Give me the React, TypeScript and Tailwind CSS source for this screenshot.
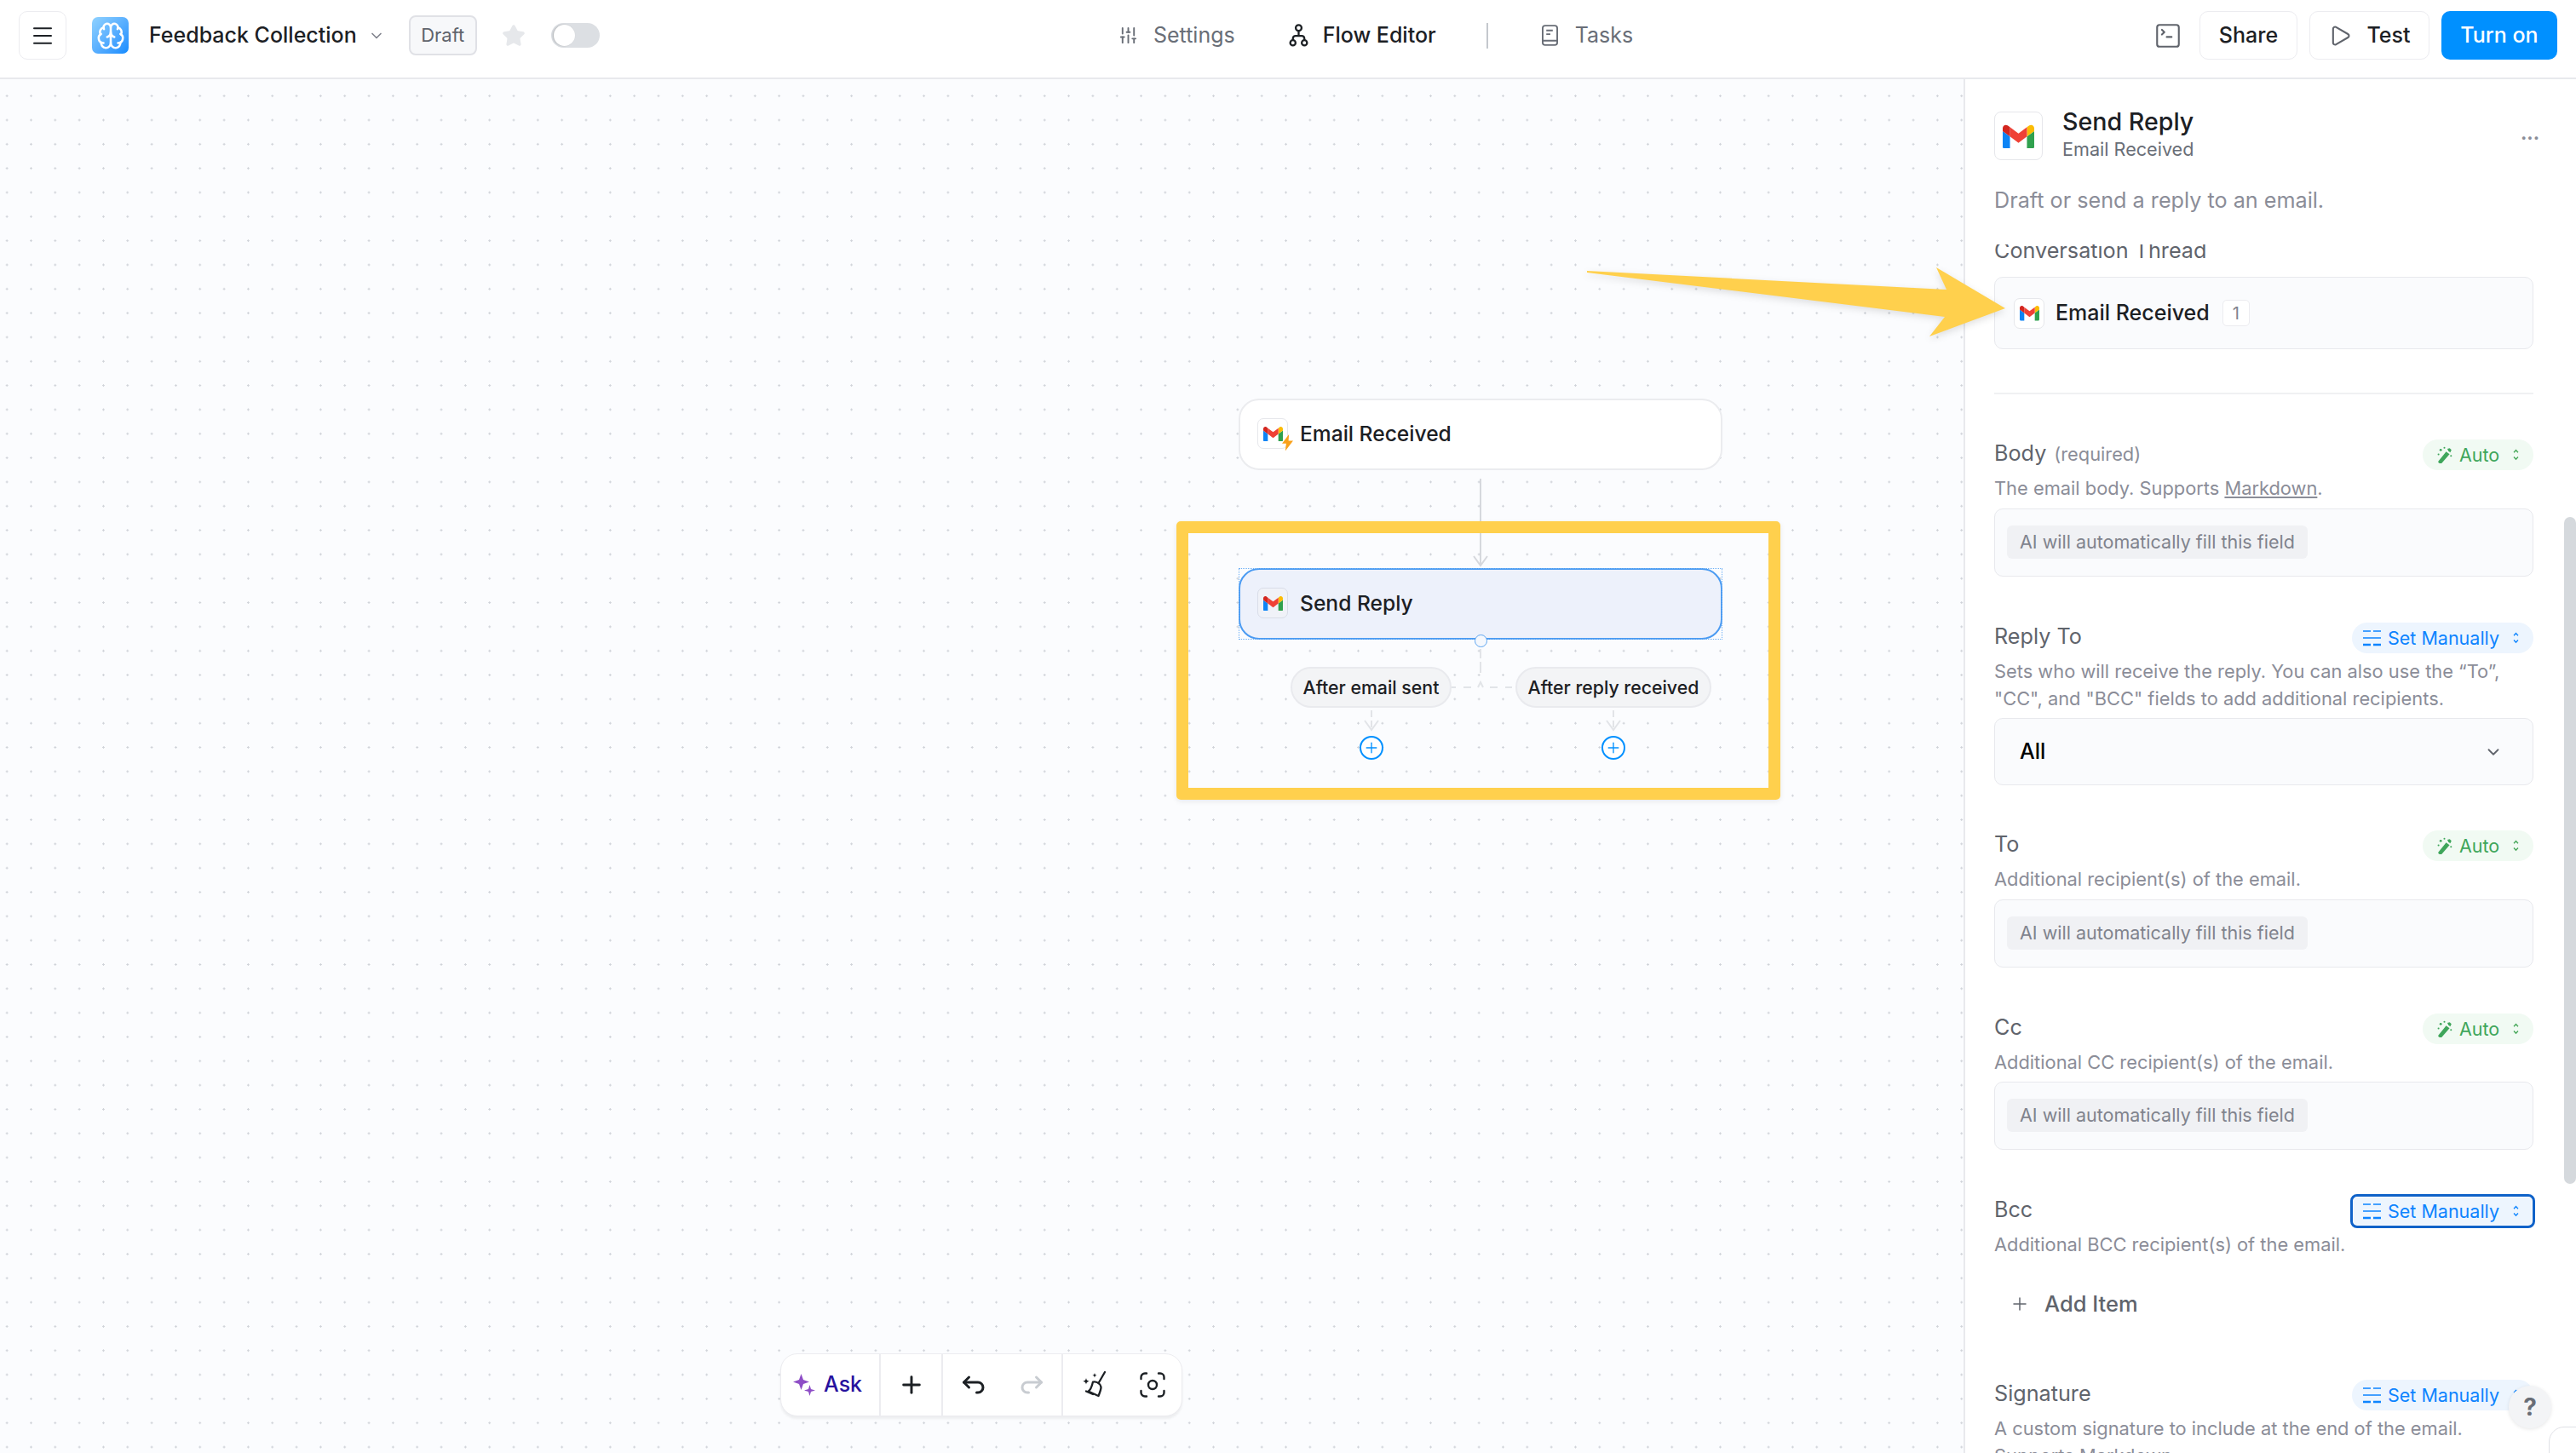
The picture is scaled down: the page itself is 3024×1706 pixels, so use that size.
import { Brain, ChevronDown, Menu, Play, Plus, SlidersVertical, SquareTerminal, Star } from "lucide-react";
import { TbArrowBackUp, TbArrowForwardUp } from "react-icons/tb";

const GmailIcon = ({ className }: { className?: string }) => (
  <svg viewBox="0 0 52 42" className={className}>
    <path fill="#0d84f5" d="M3.6 42h8.4V21.6L0 12.6v25.8C0 40.4 1.6 42 3.6 42z" />
    <path fill="#30a14e" d="M40 42h8.4c2 0 3.6-1.6 3.6-3.6V12.6l-12 9z" />
    <path fill="#fbbc04" d="M40 6v15.6l12-9V7.8c0-4.4-5-7-8.6-4.2z" />
    <path fill="#ef4136" d="M12 21.6V6l14 10.5L40 6v15.6L26 32.1z" />
    <path fill="#d3261f" d="M0 7.8v4.8l12 9V6L8.6 3.6C5 .8 0 3.4 0 7.8z" />
  </svg>
);

const GmailBox = ({ tinted, size = "small" }: { tinted?: boolean; size?: "small" | "large" }) => (
  <div
    className={
      size === "large"
        ? "flex h-[57px] w-[57px] shrink-0 items-center justify-center rounded-[8px] border border-[#e6e7eb] bg-white"
        : `flex h-[36px] w-[36px] shrink-0 items-center justify-center rounded-[7px] border ${tinted ? "border-[#d9dde8] bg-[#f0f2f8]" : "border-[#e6e7eb] bg-white"}`
    }
  >
    <GmailIcon className={size === "large" ? "w-[37px]" : "w-[23px]"} />
  </div>
);

const ChevronsSmall = ({ className }: { className?: string }) => (
  <svg viewBox="0 0 8 18" fill="none" stroke="currentColor" strokeWidth="1.6" className={className}>
    <path d="M1.2 6 4 3l2.8 3M1.2 12 4 15l2.8-3" />
  </svg>
);

const WandIcon = ({ className }: { className?: string }) => (
  <svg viewBox="0 0 22 24" fill="currentColor" className={className}>
    <path d="M13.4 7.2l4.6 3.6L7 23.4c-.6.6-1.4.7-2.1.2l-1.7-1.3c-.7-.6-.8-1.4-.3-2.1z" />
    <path d="M15 3.4l3.2-.8 2.4 2.4-1.6 3.4-2.6-2z" />
    <circle cx="6" cy="5" r="1.6" />
    <circle cx="11" cy="2" r="1.2" />
    <circle cx="3" cy="11" r="1.2" />
    <circle cx="20" cy="13" r="1.2" />
  </svg>
);

const ManualIcon = ({ className }: { className?: string }) => (
  <svg viewBox="0 0 21 20" fill="none" stroke="currentColor" className={className}>
    <path strokeWidth="1.6" d="M0 2h9M12 2h9M0 10h21" />
    <path strokeWidth="2.6" d="M0 18h9M12 18h9" />
  </svg>
);

const BookIcon = ({ className }: { className?: string }) => (
  <svg viewBox="0 0 20 26" fill="none" stroke="currentColor" strokeWidth="2" className={className}>
    <rect x="1" y="1" width="18" height="24" rx="3" />
    <path d="M1 19.5h18M5.5 7h8M5.5 11.5h5" />
  </svg>
);

const FlowIcon = ({ className }: { className?: string }) => (
  <svg viewBox="0 0 22 26" fill="none" stroke="currentColor" strokeWidth="2.2" className={className}>
    <circle cx="11" cy="4.6" r="3.3" />
    <path d="M11 8v5.500M4.500 18.500v-2a3 3 0 0 1 3-3h7a3 3 0 0 1 3 3v2" />
    <circle cx="4.500" cy="21.500" r="3" />
    <circle cx="17.500" cy="21.500" r="3" />
  </svg>
);

const SparklesIcon = ({ className }: { className?: string }) => (
  <svg viewBox="0 0 26 26" fill="currentColor" className={className}>
    <path d="M9.500 0 12 7l7 2.500L12 12l-2.500 7L7 12 0 9.500 7 7z" />
    <path d="M19.500 13 21 18l5 1.500L21 21l-1.500 5L18 21l-5-1.500L18 18z" />
  </svg>
);

const BroomIcon = ({ className }: { className?: string }) => (
  <svg viewBox="0 0 32 34" fill="none" stroke="currentColor" strokeWidth="2.3" strokeLinecap="round" strokeLinejoin="round" className={className}>
    <path d="M29 2 21.500 15" />
    <path d="M15 13.500c4-1 9 2 9.500 6 .2 2-.8 5-3 10.500l-12-5.500c2.500-1 4-4.500 5.500-11z" />
    <path d="M7 24.500 15 28" />
    <path fill="currentColor" stroke="none" d="M7 9c.4 2.400 1.300 3.300 3.800 3.800C8.300 13.300 7.400 14.200 7 16.600 6.600 14.200 5.700 13.300 3.200 12.800 5.700 12.300 6.600 11.400 7 9zM17 3c.3 1.700 1 2.400 2.800 2.800C18 6.100 17.300 6.800 17 8.600 16.700 6.800 16 6.100 14.200 5.800 16 5.400 16.700 4.700 17 3z" />
  </svg>
);

const ScanIcon = ({ className }: { className?: string }) => (
  <svg viewBox="0 0 30 30" fill="none" stroke="currentColor" strokeWidth="2.4" strokeLinecap="round" className={className}>
    <path d="M1.500 8V6a4.500 4.500 0 0 1 4.500-4.500h2M22 1.500h2A4.500 4.500 0 0 1 28.500 6v2M28.500 22v2a4.500 4.500 0 0 1-4.500 4.500h-2M8 28.500H6A4.500 4.500 0 0 1 1.500 24v-2" />
    <circle cx="15" cy="15" r="5" />
  </svg>
);

const Bolt = ({ className }: { className?: string }) => (
  <svg viewBox="0 0 12 18" fill="#f9a11b" className={className}>
    <path d="M7.500 0 0 10h4.500L3.500 18 12 7H7z" />
  </svg>
);

const ModePill = ({ mode, focused }: { mode: "auto" | "manual"; focused?: boolean }) =>
  mode === "auto" ? (
    <div className="flex h-[36px] w-[130px] items-center rounded-full bg-[#f1faf3] pl-[16px] text-[#3fa65b]">
      <WandIcon className="w-[19px]" />
      <span className="ml-[8px] text-[21.5px]">Auto</span>
      <ChevronsSmall className="ml-[16px] w-[7px] text-[#46a758]" />
    </div>
  ) : (
    <div
      className={`flex h-[36px] w-[213px] items-center bg-[#edf5fe] text-[#0d84ff] ${focused ? "rounded-[6px] border-2 border-white pl-[11px] outline-[3px] -outline-offset-1 outline-[#0f62c9]" : "rounded-full pl-[13px]"}`}
    >
      <ManualIcon className="w-[21px]" />
      <span className="ml-[8px] text-[21.5px]">Set Manually</span>
      <ChevronsSmall className="ml-[16px] w-[7px] text-[#0d84ff]" />
    </div>
  );

const Field = ({
  label,
  hint,
  mode,
  focused,
  children,
  desc,
  className = "mb-[54px]",
}: {
  label: string;
  hint?: string;
  mode: "auto" | "manual";
  focused?: boolean;
  desc: React.ReactNode;
  children?: React.ReactNode;
  className?: string;
}) => (
  <div className={className}>
    <div className="flex h-[36px] items-center justify-between">
      <div className="pb-[3px] text-[25.2px] text-[#60646c]">
        {label}
        {hint && <span className="ml-[9px] text-[21.8px] text-[#8b8d98]">{hint}</span>}
      </div>
      <ModePill mode={mode} focused={focused} />
    </div>
    <div className="mt-[5px] text-[21.85px] leading-[32px] text-[#8b8d98]">{desc}</div>
    {children}
  </div>
);

const AutoFill = ({ className = "mt-[8px]" }: { className?: string }) => (
  <div className={`${className} h-[80px] rounded-[10px] border border-[#e8e9ed] bg-[#fafbfd] px-[14px] pt-[19px]`}>
    <span className="inline-flex h-[39px] items-center rounded-[6px] bg-[#f0f1f4] px-[15px] text-[21.5px] text-[#80838d]">
      AI will automatically fill this field
    </span>
  </div>
);

const ToolbarButton = ({ children, className }: { children: React.ReactNode; className?: string }) => (
  <div className={`flex items-center ${className ?? ""}`}>{children}</div>
);

export default function App() {
  return (
    <div className="relative flex h-[1706px] w-[3024px] flex-col overflow-hidden bg-white [font-family:Inter,sans-serif] text-[#1c2024]">
      {/* top bar */}
      <header className="flex h-[93px] shrink-0 items-center border-b-2 border-[#e8e9ed] bg-white pb-[8px]">
        <div className="flex w-[1313px] shrink-0 items-center pl-[22px]">
          <button className="flex h-[57px] w-[56px] items-center justify-center rounded-[10px] border border-[#ececf0]">
            <Menu className="h-[30px] w-[30px]" strokeWidth={1.6} />
          </button>
          <div className="ml-[30px] flex h-[43px] w-[43px] items-center justify-center rounded-[7px] bg-gradient-to-br from-[#90d2ff] to-[#0c8bff]">
            <Brain className="h-[34px] w-[34px] text-white" strokeWidth={1.8} />
          </div>
          <span className="ml-[24px] text-[25px] font-medium">Feedback Collection</span>
          <ChevronDown className="ml-[13px] h-[20px] w-[20px] text-[#80838d]" strokeWidth={2} />
          <div className="ml-[28px] flex h-[47px] w-[80px] items-center justify-center rounded-[8px] border-2 border-[#e0e1e6] bg-[#f7f8fa] text-[22px] text-[#60646c]">
            Draft
          </div>
          <Star className="ml-[29px] h-[28px] w-[28px] fill-[#e6e8eb] text-[#e6e8eb]" />
          <div className="ml-[30px] flex h-[29px] w-[57px] items-center rounded-full bg-[#dcdfe3] pl-[3px]">
            <div className="h-[25px] w-[25px] rounded-full bg-white shadow-[-1px_0_2px_rgba(0,0,0,0.2)]" />
          </div>
        </div>
        <nav className="flex items-center">
          <SlidersVertical className="h-[23px] w-[23px] text-[#696e77]" strokeWidth={2} />
          <span className="ml-[18px] text-[25px] text-[#696e77]">Settings</span>
          <FlowIcon className="ml-[63px] h-[27px] w-[23px]" />
          <span className="ml-[17px] text-[25px] font-medium">Flow Editor</span>
          <div className="ml-[59px] h-[30px] w-[2px] bg-[#c4c8cd]" />
          <BookIcon className="ml-[63px] h-[25px] w-[19px] text-[#696e77]" />
          <span className="ml-[20px] text-[25px] text-[#696e77]">Tasks</span>
        </nav>
        <div className="ml-auto flex items-center pr-[22px]">
          <SquareTerminal className="h-[34px] w-[34px] text-[#60646c]" strokeWidth={1.5} />
          <button className="ml-[20px] flex h-[57px] w-[115px] items-center justify-center rounded-[10px] border border-[#ececf0] text-[25px] font-medium">
            Share
          </button>
          <button className="ml-[14px] flex h-[57px] w-[141px] items-center justify-center gap-[17px] rounded-[10px] border border-[#ececf0] text-[25px] font-medium">
            <Play className="h-[28px] w-[28px] text-[#60646c]" strokeWidth={1.8} />
            Test
          </button>
          <button className="ml-[14px] flex h-[57px] w-[136px] items-center justify-center rounded-[10px] bg-[#0090ff] text-[25px] font-medium text-white">
            Turn on
          </button>
        </div>
      </header>

      <main className="flex min-h-0 flex-1">
        {/* canvas */}
        <section className="relative flex-1 bg-[#fbfcfe] bg-[radial-gradient(circle,#d0d3d9_1px,transparent_1.4px)] bg-[length:28.33px_28.33px] bg-[position:22.3px_5.5px]">
          <svg className="absolute inset-0 h-full w-full" fill="none">
            <path d="M1738 469V570" stroke="#d6d8dd" strokeWidth="2" />
            <path d="M1730 560l8 11 8-11" stroke="#d6d8dd" strokeWidth="2" />
            <path d="M1738 669V680M1738 684V697" stroke="#e2e4e8" strokeWidth="2" />
            <path d="M1704 714H1709M1718 714H1727M1749 714H1758M1767 714H1775" stroke="#e2e4e8" strokeWidth="2" />
            <path d="M1735 714l3-6 3 6" stroke="#e2e4e8" strokeWidth="2" />
            <path d="M1610 741V762M1894 741V762" stroke="#e2e4e8" strokeWidth="2" strokeDasharray="8 4" />
            <path d="M1602 753l8 11 8-11M1886 753l8 11 8-11" stroke="#e2e4e8" strokeWidth="2" />
          </svg>

          <div className="absolute left-[1454px] top-[375px] flex h-[84px] w-[568px] items-center rounded-[24px] border-2 border-[#ebecef] bg-white pb-[2px] pl-[20px]">
            <div className="relative">
              <GmailBox />
              <Bolt className="absolute -bottom-[2px] -right-[6px] w-[13px]" />
            </div>
            <span className="ml-[14px] text-[24.6px] font-medium">Email Received</span>
          </div>

          <div className="absolute left-[1454px] top-[574px] h-[84px] w-[568px] outline-1 -outline-offset-1 outline-dotted outline-[#6fb0f5]">
            <div className="flex h-full items-center rounded-[24px] border-2 border-[#4b9bf2] bg-[#edf1fb] pb-[2px] pl-[20px]">
              <GmailBox tinted />
              <span className="ml-[14px] text-[24.6px] font-medium">Send Reply</span>
            </div>
          </div>
          <div className="absolute left-[1731px] top-[652px] h-[15px] w-[15px] rounded-full border-[1.5px] border-[#5ea5f0] bg-[#f5f8fd]" />

          <div className="absolute left-[1515px] top-[690px] flex h-[48px] w-[189px] items-center justify-center rounded-full border-2 border-[#e9eaee] bg-[#f3f4f6] pt-[2px] text-[21.3px] font-medium">
            After email sent
          </div>
          <div className="absolute left-[1779px] top-[690px] flex h-[48px] w-[230px] items-center justify-center rounded-full border-2 border-[#e9eaee] bg-[#f3f4f6] pt-[2px] text-[21.3px] font-medium">
            After reply received
          </div>
          <div className="absolute left-[1596px] top-[771px] flex h-[28px] w-[28px] items-center justify-center rounded-full border-2 border-[#0090ff] bg-white">
            <Plus className="h-[20px] w-[20px] text-[#0090ff]" strokeWidth={1.6} />
          </div>
          <div className="absolute left-[1880px] top-[771px] flex h-[28px] w-[28px] items-center justify-center rounded-full border-2 border-[#0090ff] bg-white">
            <Plus className="h-[20px] w-[20px] text-[#0090ff]" strokeWidth={1.6} />
          </div>

          {/* annotation */}
          <div className="absolute left-[1381px] top-[519px] h-[327px] w-[709px] rounded-[5px] border-[14px] border-[#ffd04d] shadow-[0_2px_6px_rgba(0,0,0,0.08)]" />

          {/* toolbar */}
          <div className="absolute left-[916px] top-[1496px] flex h-[74px] w-[472px] rounded-[20px] border border-[#ececf0] bg-white shadow-[0_3px_3px_rgba(0,0,0,0.06)]">
            <ToolbarButton className="w-[117px] gap-[10px] border-r-2 border-[#ececf0] pl-[14px]">
              <SparklesIcon className="w-[26px] text-[#8e4ec6]" />
              <span className="text-[25px] font-medium text-[#27129e]">Ask</span>
            </ToolbarButton>
            <ToolbarButton className="w-[73px] justify-center border-r-2 border-[#ececf0]">
              <Plus className="h-[32px] w-[32px]" strokeWidth={2.2} />
            </ToolbarButton>
            <ToolbarButton className="w-[141px] justify-center gap-[34px] border-r-2 border-[#ececf0]">
              <TbArrowBackUp className="h-[36px] w-[36px]" />
              <TbArrowForwardUp className="h-[36px] w-[36px] text-[#c8ccd1]" />
            </ToolbarButton>
            <ToolbarButton className="flex-1 justify-center gap-[38px]">
              <BroomIcon className="h-[34px] w-[32px]" />
              <ScanIcon className="h-[30px] w-[30px]" />
            </ToolbarButton>
          </div>
        </section>

        {/* right panel */}
        <aside className="relative flex w-[719px] shrink-0 flex-col border-l-2 border-[#e8e9ed] bg-white">
          <div className="h-[194px] shrink-0 pl-[34px] pr-[50px] pt-[36px]">
            <div className="flex items-center">
              <GmailBox size="large" />
              <div className="-mt-[3px] ml-[23px] flex-1">
                <div className="text-[28.6px] font-medium leading-[34px]">Send Reply</div>
                <div className="text-[21.6px] leading-[30px] text-[#696e77]">Email Received</div>
              </div>
              <span className="-mt-[8px] mr-[-7px] text-[22px] font-bold leading-none text-[#8b8d98]">...</span>
            </div>
            <div className="mt-[27px] text-[25.2px] text-[#8b8d98]">Draft or send a reply to an email.</div>
          </div>

          <div className="min-h-0 flex-1 overflow-hidden pl-[34px] pr-[50px]">
            <div className="-mt-[7px] text-[25.2px] leading-[28px] text-[#60646c]">Conversation Thread</div>
            <div className="mt-[17px] flex h-[85px] items-center rounded-[10px] border border-[#e8e9ed] bg-[#fafbfd] pl-[22px]">
              <GmailBox />
              <span className="ml-[13px] text-[25px] font-medium">Email Received</span>
              <span className="ml-[15px] flex h-[31px] w-[32px] items-center justify-center rounded-[5px] border border-[#ececf0] bg-white text-[20px] text-[#80838d]">
                1
              </span>
            </div>
            <div className="mb-[53px] mt-[51px] h-[2px] bg-[#f0f1f3]" />

            <Field
              label="Body"
              hint="(required)"
              mode="auto"
              desc={
                <>
                  The email body. Supports <span className="underline">Markdown</span>.
                </>
              }
            >
              <AutoFill />
            </Field>

            <Field
              label="Reply To"
              mode="manual"
              className="mb-[53px]"
              desc={
                <>
                  Sets who will receive the reply. You can also use the “To”,
                  <br />
                  "CC", and "BCC" fields to add additional recipients.
                </>
              }
            >
              <div className="mt-[7px] flex h-[79px] items-center justify-between rounded-[10px] border border-[#e8e9ed] bg-[#fafbfd] pl-[29px] pr-[35px]">
                <span className="text-[25px] font-medium text-black">All</span>
                <ChevronDown className="h-[22px] w-[22px] text-[#60646c]" strokeWidth={2} />
              </div>
            </Field>

            <Field label="To" mode="auto" desc="Additional recipient(s) of the email.">
              <AutoFill />
            </Field>

            <Field label="Cc" mode="auto" className="mb-[54px]" desc="Additional CC recipient(s) of the email.">
              <AutoFill className="mt-[7px]" />
            </Field>

            <Field
              label="Bcc"
              mode="manual"
              focused
              className="mb-[71px]"
              desc="Additional BCC recipient(s) of the email."
            >
              <div className="mt-[36px] flex h-[36px] items-center pl-[18px] text-[25.5px] font-medium text-[#60646c]">
                <Plus className="h-[24px] w-[24px]" strokeWidth={1.5} />
                <span className="ml-[17px]">Add Item</span>
              </div>
            </Field>

            <Field
              label="Signature"
              mode="manual"
              desc={
                <>
                  A custom signature to include at the end of the email.
                  <br />
                  Supports Markdown.
                </>
              }
            />
          </div>

          {/* scrollbar + floating widgets */}
          <div className="absolute right-0 top-[514px] h-[783px] w-[14px] rounded-full bg-[#d5d9dd]" />
          <div className="absolute left-[638px] top-[1534px] flex h-[50px] w-[50px] items-center justify-center rounded-full bg-[#f3f4f6] text-[28px] font-bold text-[#696e77] shadow-[0_1px_4px_rgba(0,0,0,0.1)]">
            ?
          </div>
          <div className="absolute -right-[4px] top-[1582px] h-[40px] w-[36px] rounded-tl-[18px] border border-[#e0e1e6] bg-white" />
        </aside>
      </main>

      {/* arrow spans canvas and panel */}
      <svg className="absolute left-[1850px] top-[300px] h-[110px] w-[520px] drop-shadow-[0_3px_4px_rgba(0,0,0,0.12)]" viewBox="1850 300 520 110">
        <path fill="#ffd04d" d="M1863 318L2285 340L2273 314L2354 362L2265 395L2283 372L1863 320Z" />
      </svg>
    </div>
  );
}
